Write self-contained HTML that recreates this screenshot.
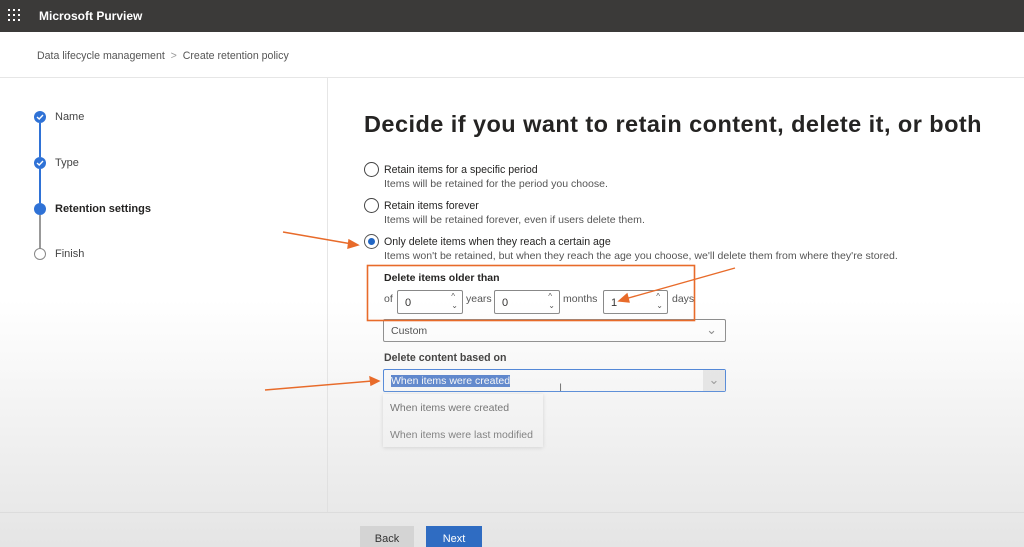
<!DOCTYPE html>
<html><head><style>
*{margin:0;padding:0;box-sizing:border-box}
body{width:1024px;height:547px;overflow:hidden;position:relative;font-family:"Liberation Sans",sans-serif;background:#fff;color:#323130}
.hdr{position:absolute;left:0;top:0;width:1024px;height:32px;background:#3b3a39;color:#fff}
.hdr .t{position:absolute;left:39px;top:9px;font-size:12px;font-weight:bold}
.bc{position:absolute;left:37px;top:50px;font-size:10.6px;color:#555}
.ln{position:absolute;background:#e6e6e6}
.abs{position:absolute}
.step{position:absolute;left:55px;font-size:11px;color:#444}
.dot{position:absolute;left:34px;width:12px;height:12px;border-radius:50%;background:#2f72d6}
.vl{position:absolute;left:39px;width:2px}
h1{position:absolute;left:364px;top:111px;font-size:23.5px;font-weight:bold;color:#252423;letter-spacing:0.45px}
.radio{position:absolute;left:364px;width:15px;height:15px;border:1.3px solid #444;border-radius:50%;background:#fff}
.rt{position:absolute;left:384px;font-size:10.6px;color:#252423}
.rs{position:absolute;left:384px;font-size:10.55px;color:#555}
.spin{position:absolute;top:290px;height:24px;border:1px solid #888;background:#fff;border-radius:2px;font-size:11px;padding:6px 0 0 7px}
.spin i{position:absolute;right:4px;top:1px;font-style:normal;font-size:8px;line-height:9px;color:#555}
.sel{position:absolute;left:383px;width:343px;height:23px;border:1px solid #888;background:#fff;border-radius:2px;font-size:10.5px;padding:5px 0 0 7px;color:#444}
.btn{position:absolute;top:526px;height:21px;font-size:11px;text-align:center;padding-top:7px}
.grad{position:absolute;left:0;top:300px;width:1024px;height:247px;background:linear-gradient(rgba(220,220,220,0),rgba(220,220,220,.75));pointer-events:none}
</style></head><body>
<div class="hdr">
<svg class="abs" style="left:8px;top:9px" width="12" height="12"><g fill="#fff"><rect x="0" y="0" width="2" height="2"/><rect x="5" y="0" width="2" height="2"/><rect x="10" y="0" width="2" height="2"/><rect x="0" y="5" width="2" height="2"/><rect x="5" y="5" width="2" height="2"/><rect x="10" y="5" width="2" height="2"/><rect x="0" y="10" width="2" height="2"/><rect x="5" y="10" width="2" height="2"/><rect x="10" y="10" width="2" height="2"/></g></svg>
<div class="t">Microsoft Purview</div></div>
<div class="bc">Data lifecycle management &nbsp;<span style="color:#999">&gt;</span>&nbsp; Create retention policy</div>
<div class="ln" style="left:0;top:77px;width:1024px;height:1px"></div>
<div class="ln" style="left:327px;top:78px;width:1px;height:434px"></div>
<div class="ln" style="left:0;top:512px;width:1024px;height:1px;background:#ddd"></div>

<div class="vl" style="top:123px;height:34px;background:#2f72d6"></div>
<div class="vl" style="top:169px;height:34px;background:#2f72d6"></div>
<div class="vl" style="top:215px;height:34px;background:#999"></div>
<div class="dot" style="top:111px"></div><svg class="abs" style="left:36px;top:113px" width="8" height="8"><path d="M1 4 L3.2 6 L7 2" stroke="#fff" stroke-width="1.4" fill="none"/></svg>
<div class="dot" style="top:157px"></div><svg class="abs" style="left:36px;top:159px" width="8" height="8"><path d="M1 4 L3.2 6 L7 2" stroke="#fff" stroke-width="1.4" fill="none"/></svg>
<div class="dot" style="top:203px"></div>
<div class="abs" style="left:34px;top:248px;width:12px;height:12px;border:1.3px solid #888;border-radius:50%;background:#fff"></div>
<div class="step" style="top:111px">Name</div>
<div class="step" style="top:157px">Type</div>
<div class="step" style="top:203px;font-weight:bold;color:#252423">Retention settings</div>
<div class="step" style="top:248px">Finish</div>

<h1>Decide if you want to retain content, delete it, or both</h1>
<div class="radio" style="top:162px"></div>
<div class="rt" style="top:164px">Retain items for a specific period</div>
<div class="rs" style="top:178px">Items will be retained for the period you choose.</div>
<div class="radio" style="top:198px"></div>
<div class="rt" style="top:200px">Retain items forever</div>
<div class="rs" style="top:214px">Items will be retained forever, even if users delete them.</div>
<div class="radio" style="top:234px;border-color:#555"><div style="position:absolute;left:3px;top:3px;width:7px;height:7px;border-radius:50%;background:#2166c4"></div></div>
<div class="rt" style="top:236px">Only delete items when they reach a certain age</div>
<div class="rs" style="top:250px">Items won't be retained, but when they reach the age you choose, we'll delete them from where they're stored.</div>

<div class="rt" style="top:272px;font-weight:bold;font-size:10.5px">Delete items older than</div>
<div class="rs" style="left:384px;top:293px;font-size:10.5px">of</div>
<div class="spin" style="left:397px;width:66px">0<i>^<br>⌄</i></div>
<div class="rs" style="left:466px;top:293px;font-size:10.5px">years</div>
<div class="spin" style="left:494px;width:66px">0<i>^<br>⌄</i></div>
<div class="rs" style="left:563px;top:293px;font-size:10.5px">months</div>
<div class="spin" style="left:603px;width:65px">1<i>^<br>⌄</i></div>
<div class="rs" style="left:672px;top:293px;font-size:10.5px">days</div>

<div class="sel" style="top:319px">Custom<span class="abs" style="right:8px;top:2px;color:#888;font-size:13px">⌄</span></div>
<div class="rt" style="top:352px;font-weight:bold">Delete content based on</div>
<div class="sel" style="top:369px;border-color:#2f72d6"><span style="background:#3a6ec8;color:#fff">When items were created</span><span class="abs" style="right:0;top:0;width:22px;height:21px;background:#e8e8e8;color:#888;text-align:center;padding-top:2px;font-size:13px">⌄</span></div>
<div class="abs" style="left:559px;top:382px;font-size:11px;color:#555">I</div>
<div class="abs" style="left:383px;top:394px;width:160px;height:53px;background:#fff;box-shadow:0 1px 4px rgba(0,0,0,.2);font-size:10.5px;color:#444">
<div class="abs" style="left:7px;top:8px">When items were created</div>
<div class="abs" style="left:7px;top:35px">When items were last modified</div></div>

<div class="grad"></div>
<div class="btn" style="left:360px;width:54px;background:#d4d4d4;color:#333">Back</div>
<div class="btn" style="left:426px;width:56px;background:#2f6cc2;color:#fff">Next</div>

<svg class="abs" style="left:0;top:0" width="1024" height="547">
<rect x="367.5" y="265.5" width="327" height="55" fill="none" stroke="#e86b2a" stroke-width="1.6"/>
<g stroke="#e86b2a" stroke-width="1.4" fill="#e86b2a">
<line x1="283" y1="232" x2="352" y2="244"/><path d="M358 245 L349 240 L348 248 Z"/>
<line x1="735" y1="268" x2="625" y2="299"/><path d="M619 301 L627 294 L629 302 Z"/>
<line x1="265" y1="390" x2="372" y2="381"/><path d="M379 381 L370 377 L371 385 Z"/>
</g></svg>
</body></html>
